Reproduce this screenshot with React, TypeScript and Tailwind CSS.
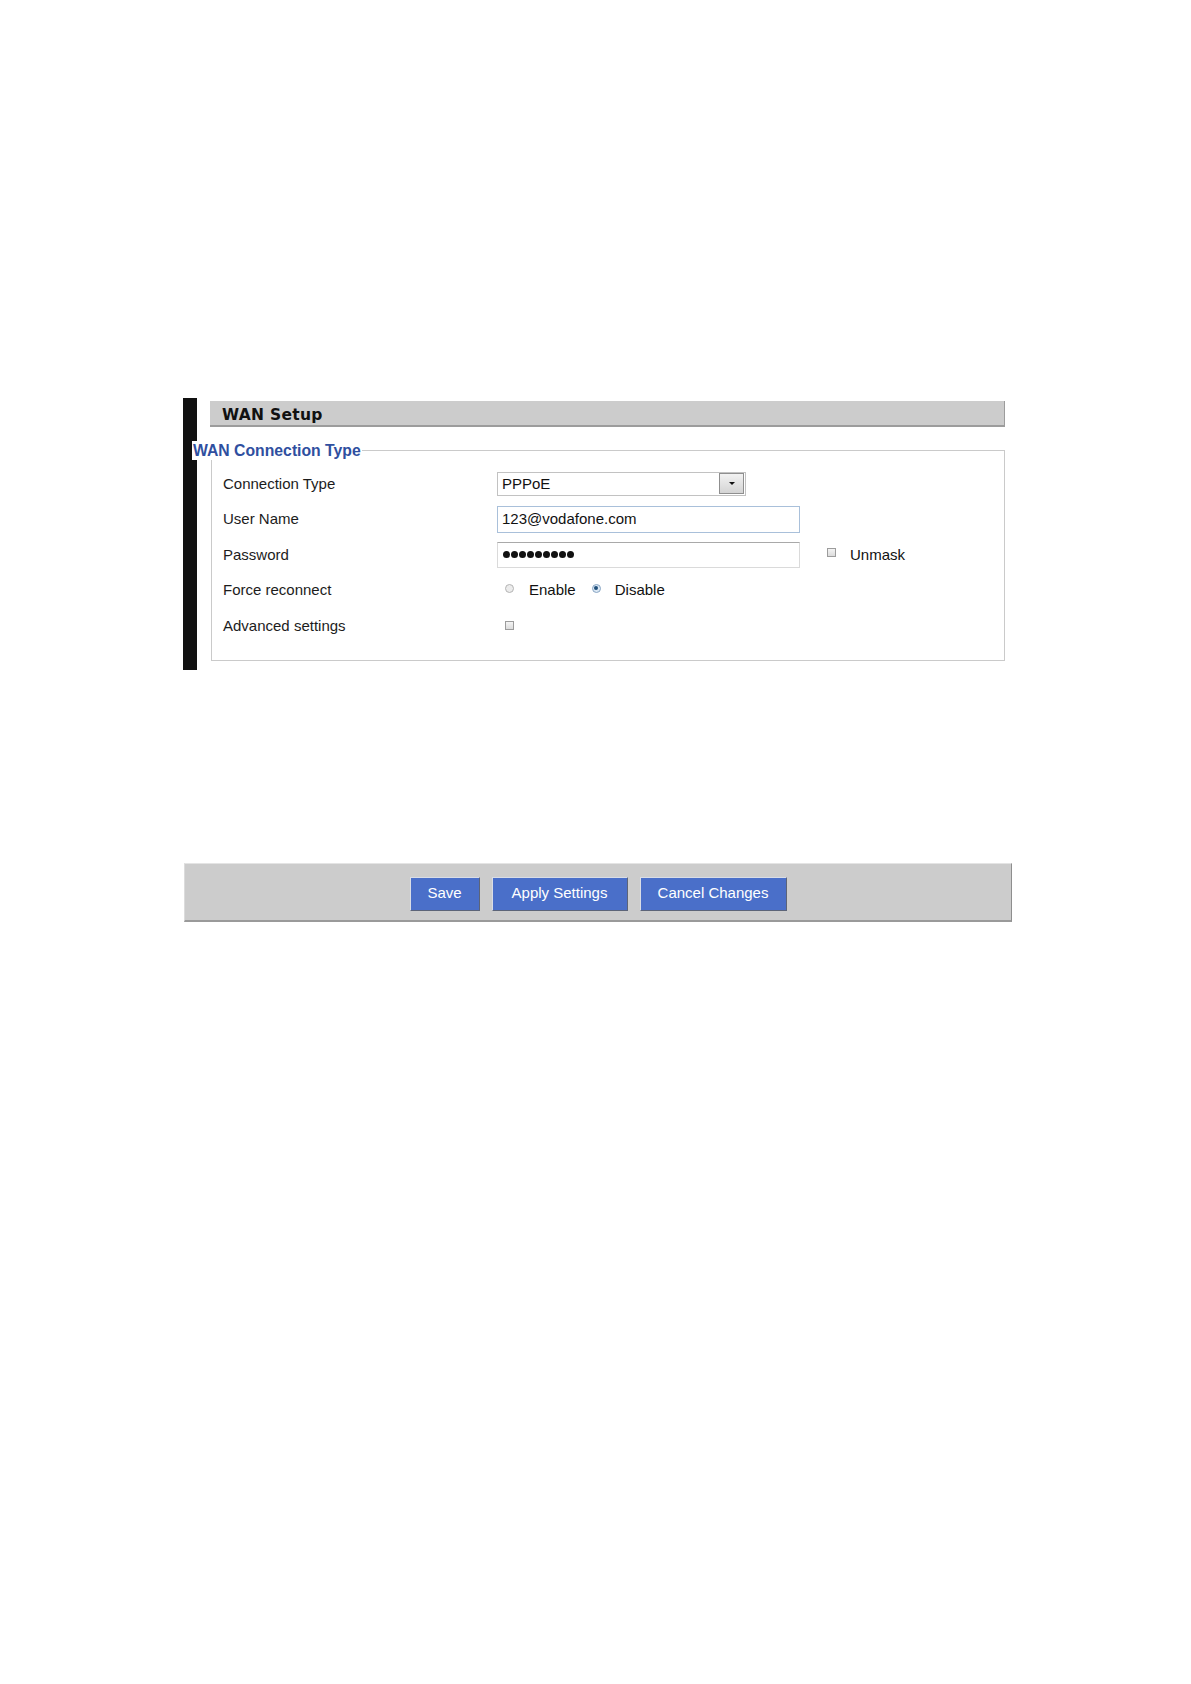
import type { ReactNode } from "react";

const LABEL_FONT = { fontFamily: '"Liberation Sans", Arial, sans-serif' };

function Row({ label, children }: { label: string; children: ReactNode }) {
  return (
    <div className="flex h-[35.5px] items-center">
      <div className="w-[274px] text-[15px] text-[#1c1c1c]">{label}</div>
      <div className="flex items-center">{children}</div>
    </div>
  );
}

function Checkbox({ className = "" }: { className?: string }) {
  return <span className={`block h-[9px] w-[9px] border border-[#9c9c9c] bg-gradient-to-b from-[#f4f4f4] to-[#dcdcdc] ${className}`} />;
}

function Radio({ checked, className = "" }: { checked?: boolean; className?: string }) {
  return (
    <span
      className={`flex h-[9px] w-[9px] items-center justify-center rounded-full border ${
        checked ? "border-[#8aa6c4] bg-[#dbe8f4]" : "border-[#b4b4b4] bg-[#ececec]"
      } ${className}`}
    >
      {checked && <span className="h-[4px] w-[4px] rounded-full bg-[#1f4f7a]" />}
    </span>
  );
}

function Button({ label, width }: { label: string; width: string }) {
  return (
    <button
      className={`${width} h-[34px] border border-t-[#d9dde6] border-l-[#d9dde6] border-r-[#5c6478] border-b-[#5c6478] bg-[#4a6fc9] text-[15px] text-white`}
    >
      {label}
    </button>
  );
}

export default function App() {
  return (
    <div className="min-h-[1684px] bg-white" style={LABEL_FONT}>
      <div className="pl-[183px] pt-[398px]">
        <div className="flex w-[822px]">
          <div className="w-[14px] bg-[#111111]" />
          <div className="flex-1 pl-[13px] pt-[3px] pb-[9px]">
            <div className="flex h-[26px] w-[795px] items-center border-b-2 border-r border-[#9c9c9c] bg-[#cccccc] pt-[4px] pl-[12px]">
              <span
                className="text-[15.5px] leading-[18px] font-bold tracking-[0.3px] text-[#111]"
                style={{ fontFamily: '"DejaVu Sans", Verdana, sans-serif' }}
              >
                WAN Setup
              </span>
            </div>

            <div className="relative mt-[23px] ml-[1px] w-[794px] border border-[#cacaca] pt-[15px] pb-[16px] pl-[11px]">
              <span className="absolute left-[-20px] top-[-10px] h-[19px] bg-white pr-[1px] pl-[1px] text-[15.75px] leading-[19px] font-bold text-[#2f4f9f]">
                WAN Connection Type
              </span>

              <Row label="Connection Type">
                <div className="flex h-[24px] w-[249px] items-center justify-between border border-[#c2c2c2] bg-white pl-[4px] pr-[1px]">
                  <span className="text-[15px] text-[#111]">PPPoE</span>
                  <span className="flex h-[21px] w-[25px] items-center justify-center border border-[#8f8f8f] bg-gradient-to-b from-[#f2f2f2] to-[#d4d4d4]">
                    <span className="h-0 w-0 border-x-[3px] border-t-[3px] border-x-transparent border-t-[#111]" />
                  </span>
                </div>
              </Row>

              <Row label="User Name">
                <div className="flex h-[27px] w-[303px] items-center border border-[#a9c0da] bg-white pl-[4px] text-[15px] text-[#111]">
                  123@vodafone.com
                </div>
              </Row>

              <Row label="Password">
                <div className="flex h-[26px] w-[303px] items-center gap-[1px] border border-[#dadada] border-t-[#a9a9a9] bg-white pl-[5px]">
                  {Array.from({ length: 9 }).map((_, i) => (
                    <span key={i} className="h-[7px] w-[7px] rounded-full bg-[#111]" />
                  ))}
                </div>
                <div className="ml-[27px] flex items-center pt-[1px]">
                  <Checkbox className="-mt-[6px]" />
                  <span className="ml-[14px] text-[15px] text-[#111]">Unmask</span>
                </div>
              </Row>

              <Row label="Force reconnect">
                <div className="flex items-center pl-[8px]">
                  <Radio className="-mt-[4px]" />
                  <span className="ml-[15px] text-[15px] text-[#111]">Enable</span>
                  <Radio checked className="ml-[16px] -mt-[4px]" />
                  <span className="ml-[14px] text-[15px] text-[#111]">Disable</span>
                </div>
              </Row>

              <Row label="Advanced settings">
                <div className="flex items-center pl-[8px]">
                  <Checkbox />
                </div>
              </Row>
            </div>
          </div>
        </div>

        <div className="mt-[193px] ml-[1px] flex h-[59px] w-[828px] items-start justify-center gap-[12px] border border-t-[#e4e4e4] border-l-[#dcdcdc] border-r-[#8e8e8e] border-b-2 border-b-[#9a9a9a] bg-[#cccccc] pt-[13px]">
          <Button label="Save" width="w-[70px]" />
          <Button label="Apply Settings" width="w-[136px]" />
          <Button label="Cancel Changes" width="w-[147px]" />
        </div>
      </div>
    </div>
  );
}
